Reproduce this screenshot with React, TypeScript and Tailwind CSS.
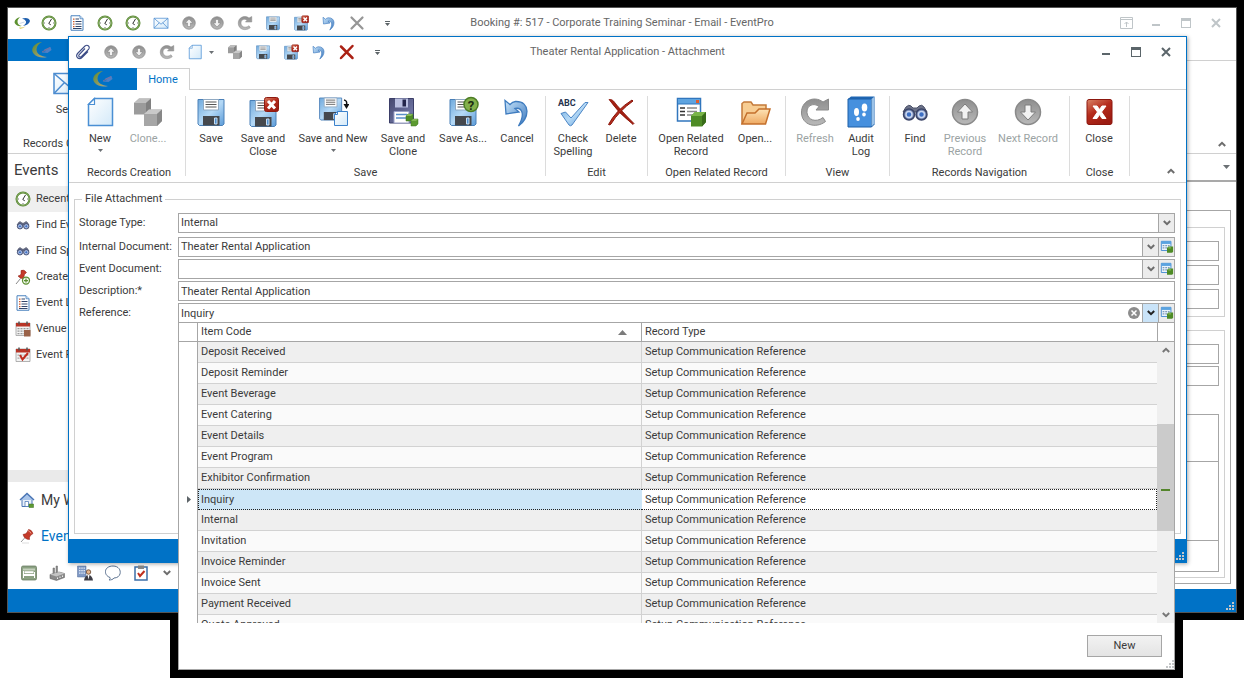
import { useState, ReactNode } from "react";

type IconProps = { className?: string };
type IconType = (p: IconProps) => ReactNode;

const BIG = "size-8";
const SMALL = "size-4";

/* shared gradients */
function Gradients() {
    return (
        <svg className="absolute size-0" aria-hidden="true">
            <defs>
                <linearGradient id="blue" x1="0" y1="0" x2="1" y2="1">
                    <stop offset="0" stopColor="#6fa9dc" />
                    <stop offset="0.5" stopColor="#b5d9f6" />
                    <stop offset="1" stopColor="#5b9bd8" />
                </linearGradient>
                <linearGradient id="navy" x1="0" y1="0" x2="1" y2="1">
                    <stop offset="0" stopColor="#45486f" />
                    <stop offset="1" stopColor="#7c83b4" />
                </linearGradient>
                <linearGradient id="paper" x1="0" y1="0" x2="1" y2="1">
                    <stop offset="0" stopColor="#ffffff" />
                    <stop offset="1" stopColor="#d3e9f9" />
                </linearGradient>
                <linearGradient id="gray" x1="0" y1="0" x2="0" y2="1">
                    <stop offset="0" stopColor="#8e8e8e" />
                    <stop offset="1" stopColor="#b9b9b9" />
                </linearGradient>
                <linearGradient id="red" x1="0" y1="0" x2="0.6" y2="1">
                    <stop offset="0" stopColor="#d98568" />
                    <stop offset="0.5" stopColor="#b52b1c" />
                    <stop offset="1" stopColor="#9c1c12" />
                </linearGradient>
                <linearGradient id="folder" x1="0" y1="0" x2="0" y2="1">
                    <stop offset="0" stopColor="#fde3b5" />
                    <stop offset="1" stopColor="#eea962" />
                </linearGradient>
                <linearGradient id="undo" x1="0" y1="0" x2="1" y2="1">
                    <stop offset="0" stopColor="#c7e4fb" />
                    <stop offset="1" stopColor="#3c78bd" />
                </linearGradient>
                <linearGradient id="crescent" x1="0" y1="0" x2="1" y2="1">
                    <stop offset="0" stopColor="#5f8a2c" />
                    <stop offset="1" stopColor="#b3a888" />
                </linearGradient>
            </defs>
        </svg>
    );
}

function Svg({ className = SMALL, children }: { className?: string; children: ReactNode }) {
    return (
        <svg viewBox="0 0 32 32" className={`shrink-0 ${className}`} fill="none" aria-hidden="true">
            {children}
        </svg>
    );
}

const Disk = () => (
    <>
        <path d="M3 3.500h26v24.500l-1.500 1.500H4.500L3 28z" fill="url(#blue)" stroke="#4a80b8" />
        <path d="M8.500 3.500h15V14h-15z" fill="#fff" stroke="#8fa9c2" />
        <path d="M10.500 6h11M10.500 8.500h11M10.500 11h11" stroke="#555" />
        <path d="M8 20h16.500v9.500H8z" fill="#45484d" />
        <path d="M19.500 22h2.500v6h-2.500z" fill="#4f8fce" stroke="#c9def2" />
    </>
);

const RedBadge = () => (
    <>
        <rect x="17.500" y="1.500" width="14" height="14" rx="2" fill="url(#red)" stroke="#8e1a10" />
        <path d="M21 5l7 7.500M28 5l-7 7.500" stroke="#fff" strokeWidth="3" />
    </>
);

const SaveIcon = (p: IconProps) => (
    <Svg {...p}>
        <Disk />
    </Svg>
);

const SaveCloseIcon = (p: IconProps) => (
    <Svg {...p}>
        <g transform="translate(0 1)">
            <Disk />
        </g>
        <RedBadge />
    </Svg>
);

const SaveNewIcon = (p: IconProps) => (
    <Svg {...p}>
        <g transform="translate(0 -1) scale(0.85)">
            <Disk />
        </g>
        <path d="M20.500 15.500h10v14h-13V18.500z" fill="url(#paper)" stroke="#3c82cc" />
        <path d="M20.500 15.500v3h-3z" fill="#fff" stroke="#3c82cc" />
        <path d="M27 4q3.500.500 2.500 5" stroke="#111" strokeWidth="1.500" />
        <path d="M26.500 8h6L29.500 13z" fill="#111" />
    </Svg>
);

const SaveCloneIcon = (p: IconProps) => (
    <Svg {...p}>
        <path d="M2.500 2.500h24V27h-24z" fill="url(#navy)" stroke="#3b3e68" />
        <path d="M8 2.500h13v9H8z" fill="#b9bfe0" />
        <path d="M15.500 3.500h3.500v7h-3.500z" fill="#23254a" />
        <path d="M7 15.500h15V27H7z" fill="#fff" stroke="#9aa0c8" />
        <path d="M9 18.500h11M9 22h11" stroke="#5b8fc9" strokeWidth="1.500" />
        <path d="M19 20l2-2h5v5l-2 2h-5z" fill="#4e8b26" stroke="#3c7420" strokeWidth="0.500" />
        <path d="M24 25l2-2h5v5l-2 2h-5z" fill="#5c9a30" stroke="#3c7420" strokeWidth="0.500" />
        <path d="M19 20l2-2h5l-2 2zM24 25l2-2h5l-2 2z" fill="#82b654" />
    </Svg>
);

const SaveAsIcon = (p: IconProps) => (
    <Svg {...p}>
        <Disk />
        <circle cx="24" cy="8.500" r="7" fill="#83b04b" stroke="#4c7d24" strokeWidth="1.500" />
        <text x="24" y="13.500" textAnchor="middle" fontSize="13" fontWeight="700" fill="#1d2c12">?</text>
    </Svg>
);

const UndoIcon = (p: IconProps) => (
    <Svg {...p}>
        <path
            d="M4 4.500L5 18l13-2-4-3.500C20 11 25 17 17.500 30c11-7 12.500-25-3-24.500q-3 .3-5.500 3z"
            fill="url(#undo)"
            stroke="#3f7cbf"
            strokeWidth="1.300"
        />
    </Svg>
);

const DeleteIcon = (p: IconProps) => (
    <Svg {...p}>
        <path d="M4 3.500q3-.5 4.500 1.500 7 9 20.500 22.500l-1 1Q13 17 4 3.500z" fill="#a32012" stroke="#8a160b" strokeWidth="0.800" />
        <path d="M28 5Q14 15 6 28q-1 1.500-2.500.500Q11 14 27 4z" fill="#b52b1c" stroke="#8a160b" strokeWidth="1" />
    </Svg>
);

const GrayXIcon = (p: IconProps) => (
    <Svg {...p}>
        <path d="M5 5l22 22M27 5L5 27" stroke="#969696" strokeWidth="4.500" strokeLinecap="round" />
    </Svg>
);

const RedXIcon = (p: IconProps) => (
    <Svg {...p}>
        <path d="M4 5l23 23M27 4L4 28" stroke="#ab2114" strokeWidth="5" strokeLinecap="round" />
    </Svg>
);

const PageIcon = (p: IconProps) => (
    <Svg {...p}>
        <path d="M10.500 2.500h18v27h-24v-21z" fill="url(#paper)" stroke="#4a8fd4" strokeWidth="1.500" />
        <path d="M10.500 2.500v6h-6z" fill="#fff" stroke="#4a8fd4" strokeWidth="1.200" />
    </Svg>
);

const CubesIcon = (p: IconProps) => (
    <Svg {...p}>
        <path d="M2 7l5-4.500h12V14l-5 4.500H2z" fill="#9b9b9b" />
        <path d="M2 7l5-4.500h12L14 7z" fill="#bfbfbf" />
        <path d="M14 7l5-4.500V14l-5 4.500z" fill="#808080" />
        <path d="M12 18l5-4.500h13V25l-5 5H12z" fill="#a6a6a6" />
        <path d="M12 18l5-4.500h13L25 18z" fill="#c9c9c9" />
        <path d="M25 18l5-4.500V25l-5 5z" fill="#878787" />
    </Svg>
);

const SpellIcon = (p: IconProps) => (
    <Svg {...p}>
        <text x="1" y="10" fontSize="9" fontWeight="700" fill="#26324d">ABC</text>
        <path d="M4 17.500l4.500-1.500 5.500 6L28 6.500h3L15 29q-1.500 1.500-3 0z" fill="url(#blue)" stroke="#4c86c6" />
    </Svg>
);

const WindowCubeIcon = (p: IconProps) => (
    <Svg {...p}>
        <path d="M2.500 2.500h23V25h-23z" fill="#fff" stroke="#3176bd" strokeWidth="1.500" />
        <path d="M2.500 2.500h23V8h-23z" fill="#5ea4e0" stroke="#3176bd" />
        <path d="M21 4h3v3h-3z" fill="#e35d2c" />
        <path d="M5 12h5M5 15.500h5M5 19h5" stroke="#333" strokeWidth="1.500" />
        <path d="M12 12h10M12 15.500h10M12 19h10" stroke="#888" strokeWidth="1.500" />
        <path d="M16 20l4-4h11v10l-4 4.500H16z" fill="#4e8b26" />
        <path d="M16 20l4-4h11l-4 4z" fill="#7ab548" />
        <path d="M27 20l4-4v10l-4 4.500z" fill="#396c1a" />
    </Svg>
);

const LookupIcon = (p: IconProps) => (
    <Svg {...p}>
        <path d="M3 3h22v21H3z" fill="#e9f3fc" stroke="#3b86cf" strokeWidth="2" />
        <path d="M3 3h22v6H3z" fill="#5aa3e0" />
        <path d="M6 13h16M6 18h10" stroke="#7f9cba" strokeWidth="3" strokeDasharray="4 2" />
        <path d="M16 18l3-3h11v11l-2 3H16z" fill="#4e8b26" />
        <path d="M19 18h6" stroke="#9ccc6c" strokeWidth="2" />
    </Svg>
);

const FolderIcon = (p: IconProps) => (
    <Svg {...p}>
        <path d="M3 28V7.500L5 6h7l2 3h13v5" fill="#f7cd93" stroke="#c47a3a" strokeWidth="1.500" />
        <path d="M3 28L8 17h8l4-4h11l-4.500 15z" fill="url(#folder)" stroke="#c4702c" strokeWidth="1.500" />
    </Svg>
);

const RefreshIcon = (p: IconProps) => (
    <Svg {...p}>
        <path
            d="M24 6C15-1 2 5 2.500 17 3 29 17 33 26.500 25.500L24 21.500C17 27 8.500 24 8 16.500 7.500 9 15 6.500 20 10.500L17 14h12.500V3z"
            fill="url(#gray)"
            stroke="#8a8a8a"
        />
    </Svg>
);

const AuditIcon = (p: IconProps) => (
    <Svg {...p}>
        <path d="M3 3l3-2.500h23.500v28L27 31H3z" fill="#1f66b3" />
        <path d="M3 3h23.500v28H3z" fill="#4690de" stroke="#1c5ea6" />
        <path d="M26.500 3l2.500-2v27l-2.500 2.500z" fill="#9cc3e8" />
        <ellipse cx="11.500" cy="16" rx="2.500" ry="4" fill="#fff" />
        <ellipse cx="13" cy="23" rx="1.800" ry="2" fill="#fff" />
        <ellipse cx="19.500" cy="11.500" rx="2.800" ry="4" fill="#fff" />
        <ellipse cx="19" cy="18.500" rx="1.800" ry="2" fill="#fff" />
    </Svg>
);

const FindIcon = (p: IconProps) => (
    <Svg {...p}>
        <path d="M7 11q3-3 5-1l2 2h4l2-2q3-2 5 1l3 5H4z" fill="#6d7389" stroke="#4a5068" />
        <circle cx="10" cy="18.500" r="5.500" fill="#7487b3" stroke="#3c4568" strokeWidth="1.500" />
        <circle cx="22.500" cy="18.500" r="5.500" fill="#7487b3" stroke="#3c4568" strokeWidth="1.500" />
        <circle cx="10" cy="18.500" r="3" fill="#3d6fc4" stroke="#c9d6ef" strokeWidth="1.500" />
        <circle cx="22.500" cy="18.500" r="3" fill="#3d6fc4" stroke="#c9d6ef" strokeWidth="1.500" />
    </Svg>
);

const UpIcon = (p: IconProps) => (
    <Svg {...p}>
        <circle cx="16" cy="16" r="12.500" fill="url(#gray)" stroke="#8a8a8a" strokeWidth="1.500" />
        <path d="M16 8l7.500 8h-4.500v7h-6v-7H8.500z" fill="#f2f2f2" stroke="#7d7d7d" />
    </Svg>
);

const DownIcon = (p: IconProps) => (
    <Svg {...p}>
        <circle cx="16" cy="16" r="12.500" fill="url(#gray)" stroke="#8a8a8a" strokeWidth="1.500" />
        <path d="M16 24l7.500-8h-4.500V9h-6v7H8.500z" fill="#f2f2f2" stroke="#7d7d7d" />
    </Svg>
);

const CloseIcon = (p: IconProps) => (
    <Svg {...p}>
        <rect x="4" y="3.500" width="25" height="25" rx="2" fill="url(#red)" stroke="#8c170e" />
        <path d="M10 10h4l2.500 3.500L19 10h4l-4.500 6 4.500 6.500h-4l-2.500-4-2.500 4h-4l4.500-6.500z" fill="#fff" stroke="#fff" strokeLinejoin="round" />
    </Svg>
);

const ClockIcon = (p: IconProps) => (
    <Svg {...p}>
        <circle cx="16" cy="16" r="13" fill="#fff" stroke="#55842f" strokeWidth="4" />
        <circle cx="16" cy="16" r="13" stroke="#a8c98b" strokeWidth="1" />
        <path d="M21 8l-5.500 9 4 2.500" stroke="#333" strokeWidth="2" />
        <path d="M6 16h2M24 16h2M16 24v2" stroke="#777" strokeWidth="2" />
    </Svg>
);

const ListIcon = (p: IconProps) => (
    <Svg {...p}>
        <path d="M4 1.500h18l6 6v23H4z" fill="#fff" stroke="#4b83bf" strokeWidth="2" />
        <path d="M22 1.500v6h6" fill="#cfe3f5" stroke="#4b83bf" strokeWidth="1.500" />
        <path d="M8 8h3M8 13h3M8 18h3M8 23h3" stroke="#cf5a2a" strokeWidth="2.500" />
        <path d="M13 8h7M13 13h12M13 18h12M13 23h12M8 27h17" stroke="#33476b" strokeWidth="2.200" />
    </Svg>
);

const MailIcon = (p: IconProps) => (
    <Svg {...p}>
        <path d="M2 6.500h28v20H2z" fill="url(#paper)" stroke="#4c8cd0" strokeWidth="1.500" />
        <path d="M2 6.500l14 12 14-12M2 26.500l10.500-11M30 26.500l-10.500-11" stroke="#4c8cd0" strokeWidth="1.500" />
    </Svg>
);

const ClipIcon = (p: IconProps) => (
    <Svg {...p}>
        <path
            d="M20 9L8.500 21q-2 3 0 4.500t4.500-.500L27 11q3-4 0-7t-7 0L6 18q-5 5-1 9.500 4.500 4 9.500-1L26 15"
            stroke="#3c4c86"
            strokeWidth="2.200"
        />
    </Svg>
);

const PinIcon = (p: IconProps) => (
    <Svg {...p}>
        <path d="M4 28l10-11" stroke="#999" strokeWidth="2" />
        <path d="M8 13q6-1 8-4l3-6q6 0 9 8l-5 4q-3 3-2 8Q11 23 8 13z" fill="#c43a2a" stroke="#8b1b10" />
        <path d="M18 5q4 1 6 6" stroke="#eb9d8c" strokeWidth="2" />
        <path d="M6 30h14" stroke="#ddd" strokeWidth="2" />
    </Svg>
);

const PinAddIcon = (p: IconProps) => (
    <Svg {...p}>
        <path d="M2 30l9-11" stroke="#888" strokeWidth="2" />
        <path d="M6 14q5-1 6-4V3q6-3 11 4l-4 4q-2 4 0 8-8 2-13-5z" fill="#c43a2a" stroke="#8b1b10" />
        <circle cx="22" cy="23" r="7" fill="#f5faf0" stroke="#5c8f30" strokeWidth="2.500" />
        <path d="M22 19v8M18 23h8" stroke="#5c8f30" strokeWidth="2.500" />
    </Svg>
);

const CalendarIcon = (p: IconProps) => (
    <Svg {...p}>
        <path d="M2 4h28v25H2z" fill="#f3f3f3" stroke="#999" strokeWidth="1.500" />
        <path d="M2 4h28v7H2z" fill="#b93426" />
        <path d="M8 1v6M24 1v6" stroke="#555" strokeWidth="3" />
        <path d="M5 15h22M5 20h22M5 25h22" stroke="#999" strokeWidth="2.500" strokeDasharray="4 2" />
        <path d="M18 18h13v13H18z" fill="#9a6248" />
    </Svg>
);

const CalendarPinIcon = (p: IconProps) => (
    <Svg {...p}>
        <path d="M2 4h28v25H2z" fill="#f3f3f3" stroke="#999" strokeWidth="1.500" />
        <path d="M2 4h28v7H2z" fill="#b93426" />
        <path d="M8 1v6M24 1v6" stroke="#555" strokeWidth="3" />
        <path d="M5 16h22M5 22h22" stroke="#aaa" strokeWidth="2.500" strokeDasharray="4 2" />
        <path d="M10 16l5 9L26 12" stroke="#c02c1e" strokeWidth="4" />
    </Svg>
);

const HomeIcon = (p: IconProps) => (
    <Svg {...p}>
        <path d="M6 15h20v14H6z" fill="#e8f0fa" stroke="#4a75b5" strokeWidth="2" />
        <path d="M2 16L16 3l14 13" fill="#a9c5ea" stroke="#4a75b5" strokeWidth="3" />
        <path d="M12 19h7v10h-7z" fill="#fff" stroke="#4a75b5" strokeWidth="1.500" />
        <path d="M20 24h9v7h-9z" fill="#5d9a33" stroke="#3a6d1c" />
    </Svg>
);

const BedIcon = (p: IconProps) => (
    <Svg {...p}>
        <rect x="1" y="2" width="30" height="28" rx="3" fill="#8ba182" stroke="#66785e" strokeWidth="1.500" />
        <path d="M4 7h24v4H4z" fill="#c4d0bd" />
        <path d="M7 12.500h18v4H7zM5 18h22v4H5z" fill="#fff" />
        <path d="M5 12v14M27 14v12" stroke="#fff" strokeWidth="2" />
    </Svg>
);

const FactoryIcon = (p: IconProps) => (
    <Svg {...p}>
        <path d="M8 6h3v12H8zM14 2h3v14h-3z" fill="#8f8f8f" stroke="#666" />
        <path d="M2 19l18-5 11 3v8L15 31 2 27z" fill="#8a8a8a" stroke="#555" />
        <path d="M2 19l18-5 11 3-16 6z" fill="#c4c4c4" />
        <path d="M17 25v3M22 23v3M27 21v3" stroke="#eee" strokeWidth="2" />
    </Svg>
);

const OfficeIcon = (p: IconProps) => (
    <Svg {...p}>
        <path d="M1 2h17v22H1z" fill="#7f98c4" stroke="#536c9b" />
        <path d="M4 6h12M4 11h12M4 16h12" stroke="#dce6f5" strokeWidth="2.500" strokeDasharray="3 1.500" />
        <circle cx="23" cy="14" r="4.500" fill="#e6b48c" stroke="#5a3a22" strokeWidth="1.500" />
        <path d="M14 31q2-11 9-11t9 11z" fill="#3d3d46" />
        <path d="M21 20h4l-2 9z" fill="#fff" />
    </Svg>
);

const BubbleIcon = (p: IconProps) => (
    <Svg {...p}>
        <path d="M16 2c19 0 19 24 2 24-2 3-6 4-10 4 2-2 3-3 2-5C-4 20-2 2 16 2z" fill="#fff" stroke="#5d7391" strokeWidth="2" />
    </Svg>
);

const TaskIcon = (p: IconProps) => (
    <Svg {...p}>
        <path d="M4 4h24v26H4z" fill="#fff" stroke="#3c6fa8" strokeWidth="3" />
        <path d="M10 1h12v7H10z" fill="#888" />
        <path d="M10 16l4 6 9-10" stroke="#c0301f" strokeWidth="4" />
    </Svg>
);

const SwirlIcon = () => (
    <svg viewBox="0 0 16 12" className="h-3 w-4" fill="none" aria-hidden="true">
        <path d="M6.500 0C2 1-.5 4 1 6.500 2 8.500 5 9.500 8 9 5 8.500 3.500 7 3.500 4.500 3.500 2.500 5 1 6.500 0z" fill="#5d9130" />
        <path d="M5 10.500q4 .500 7-1.500-3 3-6 3z" fill="#e0cf6a" />
        <path d="M8 1.500q7-1.500 8 2.500-1 4-7 5 3.500-2.500 3-4.500T8 1.500z" fill="#1f5fae" />
        <path d="M5.500 6.500l5-1.500" stroke="#c9d8ea" />
    </svg>
);

const TabLogo = () => (
    <svg viewBox="0 0 24 18" className="h-[18px] w-6" fill="none" aria-hidden="true">
        <path d="M12 1C4 2 0 8 3.500 12.500 6 16 12 17.500 17 16 11 15.500 6.500 13 6.500 8.500 6.500 5 9 2.500 12 1z" fill="url(#crescent)" />
        <path d="M14 8.500L20.500 6l1 3-4 3-6-.5 4.500-1.500z" fill="#4f7fc4" />
        <path d="M12 11l8-4.500" stroke="#7a6f9c" />
    </svg>
);

function Triangle({ className = "" }: IconProps) {
    return (
        <svg viewBox="0 0 5 3" className={`h-[3px] w-[5px] ${className}`} aria-hidden="true">
            <path d="M0 0h5L2.500 3z" fill="#6b7074" />
        </svg>
    );
}

function Chevron({ up = false }: { up?: boolean }) {
    return (
        <svg viewBox="0 0 8 6" className="h-1.5 w-2" fill="none" aria-hidden="true">
            <path d={up ? "M.8 5L4 1.800 7.200 5" : "M.8 1L4 4.200 7.200 1"} stroke="currentColor" strokeWidth="2" />
        </svg>
    );
}

function MoreButton() {
    return (
        <button type="button" aria-label="Customize toolbar" className="ml-2 flex h-7 w-4 items-center justify-center">
            <svg viewBox="0 0 5 5" className="size-[5px]" aria-hidden="true">
                <path d="M0 0h5v1H0zM0 2h5L2.500 5z" fill="#5d6468" />
            </svg>
        </button>
    );
}

/* caption buttons at the right of a window */
function WindowButtons({ pin = false, className }: { pin?: boolean; className: string }) {
    const btn = "flex h-7 w-[30px] items-center justify-center";
    return (
        <div className={`flex justify-end pr-[5px] ${className}`}>
            {pin && (
                <button type="button" aria-label="Ribbon options" className={btn}>
                    <svg viewBox="0 0 13 12" className="h-3 w-[13px]" fill="none" stroke="currentColor" aria-hidden="true">
                        <path d="M.5.500h12v11H.500zM.5 2.500h12M6.500 10V5M4.500 7l2-2 2 2" />
                    </svg>
                </button>
            )}
            <button type="button" aria-label="Minimize" className={btn}>
                <svg viewBox="0 0 10 10" className="size-2.5" fill="currentColor" aria-hidden="true">
                    <path d="M1 6h8v2H1z" />
                </svg>
            </button>
            <button type="button" aria-label="Maximize" className={btn}>
                <svg viewBox="0 0 10 10" className="size-2.5" fill="currentColor" aria-hidden="true">
                    <path fillRule="evenodd" d="M0 0h10v10H0zM1 3v6h8V3z" />
                </svg>
            </button>
            <button type="button" aria-label="Close window" className={btn}>
                <svg viewBox="0 0 10 10" className="size-2.5" fill="none" stroke="currentColor" strokeWidth="2" aria-hidden="true">
                    <path d="M1 1l8 8M9 1L1 9" />
                </svg>
            </button>
        </div>
    );
}

function ToolButton({ icon: Icon, label }: { icon: IconType; label: string }) {
    return (
        <button type="button" aria-label={label} className="flex h-7 w-7 items-center justify-center">
            <Icon />
        </button>
    );
}

function Grip() {
    return (
        <svg viewBox="0 0 8 8" className="size-2" fill="#c4c6c8" aria-hidden="true">
            <path d="M6 0h2v2H6zM3 3h2v2H3zM6 3h2v2H6zM0 6h2v2H0zM3 6h2v2H3zM6 6h2v2H6z" />
        </svg>
    );
}

const mainTools: [string, IconType][] = [
    ["Recent", ClockIcon],
    ["Event list", ListIcon],
    ["Recent bookings", ClockIcon],
    ["Recent accounts", ClockIcon],
    ["Email", MailIcon],
    ["Previous", UpIcon],
    ["Next", DownIcon],
    ["Refresh", RefreshIcon],
    ["Save", SaveIcon],
    ["Save and close", SaveCloseIcon],
    ["Undo", UndoIcon],
    ["Delete", GrayXIcon],
];

const navItems: [string, IconType][] = [
    ["Recent", ClockIcon],
    ["Find Event", FindIcon],
    ["Find Space", FindIcon],
    ["Create", PinAddIcon],
    ["Event List", ListIcon],
    ["Venue", CalendarIcon],
    ["Event Plan", CalendarPinIcon],
];

const modules: [string, IconType][] = [
    ["Rooms", BedIcon],
    ["Resources", FactoryIcon],
    ["Accounts", OfficeIcon],
    ["Communication", BubbleIcon],
    ["Tasks", TaskIcon],
];

type RibbonItem = {
    label: string;
    icon: IconType;
    width: string;
    disabled?: boolean;
    menu?: boolean;
};

const ribbon: { name: string; className: string; items: RibbonItem[] }[] = [
    {
        name: "Records Creation",
        className: "w-[117px] pl-[7px]",
        items: [
            { label: "New", icon: PageIcon, width: "w-12", menu: true },
            { label: "Clone...", icon: CubesIcon, width: "w-12", disabled: true },
        ],
    },
    {
        name: "Save",
        className: "w-[360px] pl-[3px]",
        items: [
            { label: "Save", icon: SaveIcon, width: "w-11" },
            { label: "Save and Close", icon: SaveCloseIcon, width: "w-15" },
            { label: "Save and New", icon: SaveNewIcon, width: "w-20", menu: true },
            { label: "Save and Clone", icon: SaveCloneIcon, width: "w-15" },
            { label: "Save As...", icon: SaveAsIcon, width: "w-15" },
            { label: "Cancel", icon: UndoIcon, width: "w-12" },
        ],
    },
    {
        name: "Edit",
        className: "w-[102px] pl-[3px]",
        items: [
            { label: "Check Spelling", icon: SpellIcon, width: "w-12" },
            { label: "Delete", icon: DeleteIcon, width: "w-12" },
        ],
    },
    {
        name: "Open Related Record",
        className: "w-[138px] pl-[3px]",
        items: [
            { label: "Open Related Record", icon: WindowCubeIcon, width: "w-20" },
            { label: "Open...", icon: FolderIcon, width: "w-12" },
        ],
    },
    {
        name: "View",
        className: "w-[104px] pl-[3px]",
        items: [
            { label: "Refresh", icon: RefreshIcon, width: "w-13", disabled: true },
            { label: "Audit Log", icon: AuditIcon, width: "w-10" },
        ],
    },
    {
        name: "Records Navigation",
        className: "w-[180px] pl-[3px]",
        items: [
            { label: "Find", icon: FindIcon, width: "w-11" },
            { label: "Previous Record", icon: UpIcon, width: "w-14", disabled: true },
            { label: "Next Record", icon: DownIcon, width: "w-[70px]", disabled: true },
        ],
    },
    {
        name: "Close",
        className: "w-[60px] pl-[3px]",
        items: [{ label: "Close", icon: CloseIcon, width: "w-13" }],
    },
];

const references = [
    "Deposit Received",
    "Deposit Reminder",
    "Event Beverage",
    "Event Catering",
    "Event Details",
    "Event Program",
    "Exhibitor Confirmation",
    "Inquiry",
    "Internal",
    "Invitation",
    "Invoice Reminder",
    "Invoice Sent",
    "Payment Received",
    "Quote Approved",
];

const fieldBox = "h-5 border border-[#a6a6a6] bg-white";
const pickBtn =
    "flex h-5 w-4 items-center justify-center border-y border-r border-[#a6a6a6] bg-[#ececec] text-[#6d6d6d]";

function Sidebar() {
    return (
        <nav className="flex w-[200px] shrink-0 flex-col">
            <h2 className="flex h-8 items-center pl-1.5 text-[15px]">Events</h2>
            <ul>
                {navItems.map(([label, Icon], i) => (
                    <li key={label} className={i === 0 ? "bg-[#efefef]" : ""}>
                        <a href="#" className="flex h-[26px] items-center gap-[5px] pl-[7px]">
                            <Icon />
                            {label}
                        </a>
                    </li>
                ))}
            </ul>
            <div className="flex-1" />
            <div className="h-3 bg-[#eaeaea]" />
            <a href="#" className="flex h-9 items-center gap-1.5 pl-[11px] text-sm">
                <HomeIcon />
                My Workspace
            </a>
            <a href="#" className="flex h-9 items-center gap-1.5 pl-[11px] text-sm text-[#0072c6]">
                <PinIcon />
                Events
            </a>
            <div className="flex h-[35px] items-center pt-0.5 pl-[7px]">
                {modules.map(([label, Icon]) => (
                    <ToolButton key={label} icon={Icon} label={label} />
                ))}
                <button type="button" aria-label="More modules" className="flex h-7 w-6 items-center justify-center text-[#6d6d6d]">
                    <Chevron />
                </button>
            </div>
        </nav>
    );
}

function EmailForm() {
    return (
        <div className="flex flex-1 flex-col">
            <div className="flex h-7 items-center justify-end border-b-2 border-[#a9a9a9] pr-0.5">
                <button type="button" aria-label="Select tab" className="flex size-4 items-center justify-center">
                    <svg viewBox="0 0 7 4" className="h-1 w-[7px]" aria-hidden="true">
                        <path d="M0 0h7L3.500 4z" fill="#6b7074" />
                    </svg>
                </button>
            </div>
            <div className="flex flex-1 pt-7 pr-[5px] pb-[5px]">
                <div className="flex flex-1 flex-col gap-[13px] border border-[#a6a6a6] pt-4 pr-[5px] pb-[5px]">
                    <div className="flex flex-col gap-1 border border-[#d0d0d0] pt-[13px] pr-[5px] pb-[7px]">
                        <input aria-label="From" className={fieldBox} />
                        <input aria-label="To" className={fieldBox} />
                        <input aria-label="Cc" className={fieldBox} />
                    </div>
                    <div className="flex flex-1 flex-col gap-0.5 border border-[#d0d0d0] pt-[13px] pr-[5px] pb-[5px]">
                        <input aria-label="Subject" className={fieldBox} />
                        <input aria-label="Reference" className={fieldBox} />
                        <div className="mt-[26px] flex flex-1 flex-col border border-[#a6a6a6]">
                            <div className="h-[47px] border-b border-[#a6a6a6]" />
                            <div className="flex-1 border-b border-[#a6a6a6]" />
                            <div className="h-[30px]" />
                        </div>
                    </div>
                </div>
            </div>
        </div>
    );
}

function MainWindow() {
    return (
        <div className="flex flex-col border border-[#555] bg-white">
            <header className="grid h-[31px] grid-cols-[1fr_auto_1fr] items-center pb-px text-[#666]">
                <div className="flex items-center">
                    <button type="button" aria-label="EventPro" className="flex h-7 w-[27px] items-center justify-center">
                        <SwirlIcon />
                    </button>
                    {mainTools.map(([label, Icon]) => (
                        <ToolButton key={label} icon={Icon} label={label} />
                    ))}
                    <MoreButton />
                </div>
                <h1>Booking #: 517 - Corporate Training Seminar - Email - EventPro</h1>
                <WindowButtons pin className="text-[#bfc5c8]" />
            </header>
            <div className="flex h-[22px] border-b border-[#d0d0d0]">
                <button type="button" aria-label="Application menu" className="flex h-[22px] w-[68px] items-center justify-center bg-[#0072c6]">
                    <TabLogo />
                </button>
            </div>
            <div className="flex h-[93px] flex-col border-b border-[#d0d0d0]">
                <div className="flex flex-1 pt-1.5 pl-9">
                    <button type="button" className="flex w-12 flex-col items-center">
                        <MailIcon className={BIG} />
                        <span className="mt-1">Send</span>
                    </button>
                </div>
                <div className="flex items-end pr-2.5 pb-0.5 pl-[15px] text-[#6d6d6d]">
                    <span className="flex-1 text-[#3b3b3b]">Records Creation</span>
                    <button type="button" aria-label="Collapse ribbon" className="pb-1">
                        <Chevron up />
                    </button>
                </div>
            </div>
            <div className="flex min-h-[435px]">
                <Sidebar />
                <EmailForm />
            </div>
            <footer className="flex h-[23px] items-end justify-end bg-[#0072c6] p-0.5">
                <Grip />
            </footer>
        </div>
    );
}

function Ribbon() {
    return (
        <div className="flex h-[93px] border-b border-[#d0d0d0] py-1.5">
            {ribbon.map((group) => (
                <section key={group.name} className={`flex shrink-0 flex-col border-r border-[#dcdcdc] ${group.className}`}>
                    <div className="flex flex-1">
                        {group.items.map((item) => (
                            <button
                                key={item.label}
                                type="button"
                                disabled={item.disabled}
                                className={`flex flex-col items-center ${item.width} ${item.disabled ? "text-[#9ba3a3]" : ""}`}
                            >
                                <item.icon className={BIG} />
                                <span className="mt-1 leading-[13px]">{item.label}</span>
                                {item.menu && <Triangle className="mt-1" />}
                            </button>
                        ))}
                    </div>
                    <div className="-mb-1 -ml-[3px] text-center whitespace-nowrap">{group.name}</div>
                </section>
            ))}
            <div className="flex flex-1 items-end justify-end pr-[11px] pb-0.5 text-[#6d6d6d]">
                <button type="button" aria-label="Collapse ribbon">
                    <Chevron up />
                </button>
            </div>
        </div>
    );
}

function Field({ id, label, children }: { id: string; label: string; children: ReactNode }) {
    return (
        <div className="flex items-center">
            <label htmlFor={id} className="w-[99px] shrink-0">
                {label}
            </label>
            <div className="relative flex flex-1">{children}</div>
        </div>
    );
}

function SelectBox({ id, value, lookup = false }: { id: string; value: string; lookup?: boolean }) {
    return (
        <>
            <div className="relative flex-1">
                <select id={id} className={`w-full appearance-none pr-5 pl-0.5 ${fieldBox}`}>
                    <option>{value}</option>
                </select>
                <span className="pointer-events-none absolute top-0 right-0 flex h-5 w-[17px] items-center justify-center border border-[#a6a6a6] bg-[#ececec] text-[#6d6d6d]">
                    <Chevron />
                </span>
            </div>
            {lookup && (
                <button type="button" aria-label="Open lookup" className={pickBtn}>
                    <LookupIcon className="size-3.5" />
                </button>
            )}
        </>
    );
}

function ReferenceList({ value, onPick }: { value: string; onPick: (v: string) => void }) {
    return (
        <div className="absolute top-full right-0 left-0 z-10 border-x border-b border-[#a6a6a6] bg-white">
            <div className="flex h-[300px] overflow-hidden">
                <div className="flex-1">
                    <table className="w-full table-fixed border-separate border-spacing-0 text-left">
                        <colgroup>
                            <col className="w-[19px]" />
                            <col className="w-[444px]" />
                            <col />
                        </colgroup>
                        <thead>
                            <tr className="h-[19px]">
                                <th className="border-r border-b border-[#a6a6a6] p-0" />
                                <th className="border-r border-b border-[#a6a6a6] p-0 pr-[14px] pl-[3px] font-normal">
                                    <span className="flex items-center justify-between">
                                        Item Code
                                        <svg viewBox="0 0 9 5" className="h-[5px] w-[9px]" aria-hidden="true">
                                            <path d="M0 5h9L4.500 0z" fill="#7b7b7b" />
                                        </svg>
                                    </span>
                                </th>
                                <th className="border-b border-[#a6a6a6] p-0 pl-[3px] font-normal">Record Type</th>
                            </tr>
                        </thead>
                        <tbody>
                            {references.map((name, i) => {
                                const active = name === value;
                                const bg = i % 2 === 0 ? "bg-[#efefef]" : "bg-[#fafafa]";
                                const edge = active
                                    ? "border-y border-dotted border-[#222]"
                                    : "border-b border-[#d2d2d2]";
                                return (
                                    <tr key={name} className="h-[21px]" onClick={() => onPick(name)}>
                                        <td className="border-r border-[#a6a6a6] p-0">
                                            {active && (
                                                <svg viewBox="0 0 4 7" className="ml-2 h-[7px] w-1" aria-hidden="true">
                                                    <path d="M0 0l4 3.500L0 7z" fill="#5d6468" />
                                                </svg>
                                            )}
                                        </td>
                                        <td className={`p-0 ${edge} ${active ? "border-l bg-[#cde6f7] pl-0.5" : `border-r pl-[3px] ${bg}`}`}>
                                            {name}
                                        </td>
                                        <td className={`p-0 pl-[3px] ${edge} ${active ? "border-r bg-white" : bg}`}>
                                            Setup Communication Reference
                                        </td>
                                    </tr>
                                );
                            })}
                        </tbody>
                    </table>
                </div>
                <div className="flex w-[17px] flex-col">
                    <div className="h-[19px] border-b border-l border-[#a6a6a6]" />
                    <div className="flex flex-1 flex-col items-center bg-[#efefef] text-[#777]">
                        <div className="flex h-[82px] pt-[5px]">
                            <Chevron up />
                        </div>
                        <div className="flex h-[107px] w-full justify-center bg-[#cbcbcb] pt-[65px]">
                            <div className="h-0.5 w-[9px] bg-[#54852c]" />
                        </div>
                        <div className="flex flex-1 items-end pb-[5px]">
                            <Chevron />
                        </div>
                    </div>
                </div>
            </div>
            <div className="flex h-[46px] items-end justify-end pb-px">
                <button
                    type="button"
                    className="mr-1 mb-[11px] h-[22px] w-[75px] border border-[#a6a6a6] bg-linear-to-b from-[#f2f2f2] to-[#e4e4e4]"
                >
                    New
                </button>
                <Grip />
            </div>
        </div>
    );
}

function AttachmentDialog() {
    const [reference, setReference] = useState("Inquiry");

    return (
        <div className="absolute top-9 right-[57px] left-[68px] flex flex-col border border-[#0072c6] bg-white shadow-[1px_1px_4px_rgba(0,0,0,0.35)]">
            <header className="grid h-[31px] grid-cols-[1fr_auto_1fr] items-center pb-px text-[#666]">
                <div className="flex items-center">
                    <ToolButton icon={ClipIcon} label="Attachment" />
                    <ToolButton icon={UpIcon} label="Previous" />
                    <ToolButton icon={DownIcon} label="Next" />
                    <ToolButton icon={RefreshIcon} label="Refresh" />
                    <ToolButton icon={PageIcon} label="New" />
                    <button type="button" aria-label="New options" className="h-7 w-3">
                        <Triangle />
                    </button>
                    <ToolButton icon={CubesIcon} label="Clone" />
                    <ToolButton icon={SaveIcon} label="Save" />
                    <ToolButton icon={SaveCloseIcon} label="Save and close" />
                    <ToolButton icon={UndoIcon} label="Cancel" />
                    <ToolButton icon={RedXIcon} label="Delete" />
                    <MoreButton />
                </div>
                <h2>Theater Rental Application - Attachment</h2>
                <WindowButtons className="text-[#5b656a]" />
            </header>
            <div className="flex h-[22px]">
                <button type="button" aria-label="Application menu" className="flex w-[68px] items-center justify-center bg-[#0072c6]">
                    <TabLogo />
                </button>
                <button type="button" className="w-[53px] border-t border-r border-[#d0d0d0] text-[#0072c6]">
                    Home
                </button>
                <div className="flex-1 border-b border-[#d0d0d0]" />
            </div>
            <Ribbon />
            <form className="px-[5px] pt-[9px] pb-[5px]" onSubmit={(e) => e.preventDefault()}>
                <fieldset className="min-h-[342px] border border-[#d0d0d0]">
                    <legend className="ml-[7px] px-[3px]">File Attachment</legend>
                    <div className="flex flex-col gap-0.5 pt-[7px] pr-[5px] pl-1">
                        <div className="pb-0.5">
                            <Field id="storage" label="Storage Type:">
                                <SelectBox id="storage" value="Internal" />
                            </Field>
                        </div>
                        <Field id="internal-doc" label="Internal Document:">
                            <SelectBox id="internal-doc" value="Theater Rental Application" lookup />
                        </Field>
                        <Field id="event-doc" label="Event Document:">
                            <SelectBox id="event-doc" value="" lookup />
                        </Field>
                        <Field id="description" label="Description:*">
                            <input id="description" defaultValue="Theater Rental Application" className={`flex-1 pl-0.5 ${fieldBox}`} />
                        </Field>
                        <Field id="reference" label="Reference:">
                            <div className={`flex flex-1 items-center ${fieldBox}`}>
                                <input
                                    id="reference"
                                    value={reference}
                                    onChange={(e) => setReference(e.target.value)}
                                    className="h-[18px] flex-1 pl-0.5"
                                />
                                <button type="button" aria-label="Clear reference" onClick={() => setReference("")} className="mr-0.5">
                                    <svg viewBox="0 0 12 12" className="size-3" aria-hidden="true">
                                        <circle cx="6" cy="6" r="6" fill="#8c8c8c" />
                                        <path d="M3.500 3.500l5 5M8.500 3.500l-5 5" stroke="#fff" strokeWidth="1.500" />
                                    </svg>
                                </button>
                            </div>
                            <button
                                type="button"
                                aria-label="Toggle list"
                                className="flex h-5 w-4 items-center justify-center border-y border-r border-[#a6a6a6] bg-[#c9e3f8] text-[#222]"
                            >
                                <Chevron />
                            </button>
                            <button type="button" aria-label="Open lookup" className={pickBtn}>
                                <LookupIcon className="size-3.5" />
                            </button>
                            <ReferenceList value={reference} onPick={setReference} />
                        </Field>
                    </div>
                </fieldset>
            </form>
            <footer className="flex h-[23px] items-end justify-end bg-[#0072c6] p-0.5">
                <Grip />
            </footer>
        </div>
    );
}

function App() {
    return (
        <div className="relative min-h-screen bg-white pb-[58px] font-['Roboto','Noto_Sans',sans-serif] text-[11px] leading-[14px] text-[#3b3b3b]">
            <Gradients />
            <div className="absolute inset-y-0 right-[61px] left-[170px] bg-black" />
            <div className="relative bg-black p-[7px]">
                <MainWindow />
            </div>
            <AttachmentDialog />
        </div>
    );
}

export default App;
